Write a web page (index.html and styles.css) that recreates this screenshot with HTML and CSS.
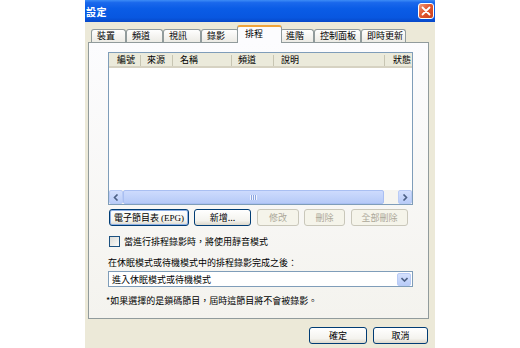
FILE: index.html
```html
<!DOCTYPE html>
<html lang="zh-Hant">

<head>
    <meta charset="UTF-8">
    <meta name="viewport" content="width=device-width, initial-scale=1.0">
    <title>設定</title>
    <link rel="stylesheet" href="styles.css">
</head>

<body>
    <div class="window">
        <div class="titlebar">
            <span class="title">設定</span>
            <span class="close">
                <svg width="10" height="10" viewBox="0 0 10 10">
                    <path d="M1.5 1.5 L8.5 8.5 M8.5 1.5 L1.5 8.5" stroke="#fff" stroke-width="1.8" stroke-linecap="round" />
                </svg>
            </span>
        </div>

        <div class="tabs">
            <span class="tab w35">裝置</span>
            <span class="tab w37">頻道</span>
            <span class="tab w38">視訊</span>
            <span class="tab w38">錄影</span>
            <span class="tab active">排程</span>
            <span class="tab w34">進階</span>
            <span class="tab w47">控制面板</span>
            <span class="tab w45">即時更新</span>
        </div>

        <div class="panel">
            <div class="listview">
                <div class="lv-header">
                    <span class="col c1">編號</span>
                    <span class="col c2">來源</span>
                    <span class="col c3">名稱</span>
                    <span class="col c4">頻道</span>
                    <span class="col c5">說明</span>
                    <span class="col c6">狀態</span>
                </div>
                <div class="lv-body"></div>
                <div class="hscroll">
                    <span class="sb-btn">
                        <svg width="6" height="7" viewBox="0 0 6 7">
                            <path d="M4.5 0.5 L1.5 3.5 L4.5 6.5" fill="none" stroke="#4d6185" stroke-width="1.6" />
                        </svg>
                    </span>
                    <span class="sb-thumb"><span class="grip"></span></span>
                    <span class="sb-track"></span>
                    <span class="sb-btn">
                        <svg width="6" height="7" viewBox="0 0 6 7">
                            <path d="M1.5 0.5 L4.5 3.5 L1.5 6.5" fill="none" stroke="#4d6185" stroke-width="1.6" />
                        </svg>
                    </span>
                </div>
            </div>

            <div class="btn-row">
                <span class="btn focus b-epg">電子節目表 <span class="latin">(EPG)</span></span>
                <span class="btn b-add">新增...</span>
                <span class="btn disabled b-edit">修改</span>
                <span class="btn disabled b-del">刪除</span>
                <span class="btn disabled b-delall">全部刪除</span>
            </div>

            <div class="check">
                <span class="box"></span>
                <span>當進行排程錄影時，將使用靜音模式</span>
            </div>

            <div class="label">在休眠模式或待機模式中的排程錄影完成之後：</div>
            <div class="combo">
                <span class="combo-text">進入休眠模式或待機模式</span>
                <span class="drop">
                    <svg width="7" height="5" viewBox="0 0 7 5">
                        <path d="M0.5 1 L3.5 4 L6.5 1" fill="none" stroke="#4d6185" stroke-width="1.6" />
                    </svg>
                </span>
            </div>

            <p class="note">*如果選擇的是鎖碼節目，屆時這節目將不會被錄影。</p>
        </div>

        <div class="footer">
            <span class="btn b-ok">確定</span>
            <span class="btn b-cancel">取消</span>
        </div>
    </div>
</body>

</html>
```

FILE: styles.css
```css
* {
    margin: 0;
    padding: 0;
    box-sizing: border-box;
}

body {
    background: #fff;
    font-family: "Noto Sans CJK TC", "Noto Sans CJK JP", sans-serif;
    font-size: 9px;
    color: #000;
}

.window {
    width: 350px;
    height: 348px;
    margin-left: 85px;
    background: #ece9d8;
}

/* 標題列 */
.titlebar {
    height: 22px;
    display: flex;
    align-items: center;
    justify-content: space-between;
    padding: 0 1px 0 1px;
    background: linear-gradient(#3d8cf6 0%, #1a68ec 12%, #0a5ce6 40%, #0857e0 80%, #0748c8 100%);
}

.title {
    color: #fff;
    font-weight: bold;
    font-size: 10px;
    letter-spacing: 0.5px;
}

.close {
    width: 16px;
    height: 16px;
    display: flex;
    align-items: center;
    justify-content: center;
    border: 1px solid #fff;
    border-radius: 3px;
    background: linear-gradient(135deg, #f09a7c 0%, #e2572f 45%, #c9401d 100%);
}

/* 頁籤 */
.tabs {
    height: 20px;
    display: flex;
    align-items: flex-end;
    padding-left: 6px;
}

.tab {
    height: 13px;
    padding-left: 5px;
    line-height: 12px;
    border: 1px solid #919b9c;
    border-bottom: none;
    border-radius: 3px 3px 0 0;
    background: linear-gradient(#fefefe, #ecebe5);
    white-space: nowrap;
}

.w34 { width: 34px; }
.w35 { width: 35px; }
.w37 { width: 37px; }
.w38 { width: 38px; }
.w45 { width: 45px; }
.w47 { width: 47px; }

.tab.active {
    width: 45px;
    height: 18px;
    margin: 0 -2px -1px -2px;
    padding-left: 7px;
    line-height: 14px;
    border-top: 2px solid #f0a43a;
    background: #fcfcfe;
    position: relative;
    z-index: 1;
}

/* 頁籤內容 */
.panel {
    width: 341px;
    height: 277px;
    margin-left: 3px;
    padding: 9px 0 0 19px;
    border: 1px solid #919b9c;
    background: linear-gradient(#fcfcfe, #f4f3ee);
}

.listview {
    width: 305px;
    height: 153px;
    display: flex;
    flex-direction: column;
    border: 1px solid #7f9db9;
    background: #fff;
}

.lv-header {
    height: 15px;
    display: flex;
    background: #ebeadb;
    border-bottom: 2px solid #d6d2c2;
}

.col {
    height: 11px;
    margin-top: 2px;
    line-height: 10px;
    padding-left: 7px;
    border-right: 1px solid #c7c5b2;
    white-space: nowrap;
}

.c1 { width: 32px; padding-left: 8px; }
.c2 { width: 32px; padding-left: 6px; }
.c3 { width: 59px; }
.c4 { width: 42px; padding-left: 6px; }
.c5 { width: 111px; }

.c6 {
    flex: 1;
    border-right: none;
    text-align: right;
    padding: 0 1px 0 0;
}

.lv-body {
    flex: 1;
}

/* 水平捲軸 */
.hscroll {
    height: 14px;
    display: flex;
    background: #f6f5f0;
}

.sb-btn {
    width: 14px;
    height: 14px;
    display: flex;
    align-items: center;
    justify-content: center;
    border: 1px solid #b9cbf5;
    border-radius: 2px;
    background: linear-gradient(#d4e0fd, #b9ccf8);
}

.sb-thumb {
    width: 261px;
    height: 14px;
    display: flex;
    align-items: center;
    justify-content: center;
    border: 1px solid #a9bff2;
    border-radius: 2px;
    background: linear-gradient(#cddbfd, #b6caf7);
}

.grip {
    width: 7px;
    height: 5px;
    background: repeating-linear-gradient(90deg, #eef3fe 0 1px, #8ca6e0 1px 2px);
}

.sb-track {
    flex: 1;
}

/* 按鈕 */
.btn {
    height: 17px;
    display: inline-flex;
    align-items: center;
    justify-content: center;
    border: 1px solid #003c74;
    border-radius: 3px;
    background: linear-gradient(#ffffff 0%, #f4f3ee 70%, #dcd8cc 100%);
    white-space: nowrap;
}

.btn.focus {
    box-shadow: inset 0 0 0 1px #8fb0e4;
}

.btn.disabled {
    color: #aca899;
    border-color: #c9c7ba;
    background: #f5f4ea;
}

.latin {
    font-family: "Liberation Serif", serif;
    margin-left: 2px;
}

.btn-row {
    display: flex;
    margin-top: 4px;
    padding-left: 1px;
}

.b-epg { width: 80px; }
.b-add { width: 57px; margin-left: 5px; }
.b-edit { width: 42px; margin-left: 6px; }
.b-del { width: 41px; margin-left: 5px; }
.b-delall { width: 57px; margin-left: 6px; }

.check {
    display: flex;
    align-items: center;
    height: 11px;
    margin-top: 10px;
    padding-left: 1px;
}

.box {
    width: 11px;
    height: 11px;
    margin-right: 4px;
    border: 1px solid #1c5180;
    background: linear-gradient(135deg, #dcdcd7, #fbfbf9);
}

.label {
    height: 12px;
    margin-top: 10px;
    line-height: 12px;
}

.combo {
    width: 305px;
    height: 16px;
    margin-top: 2px;
    display: flex;
    align-items: center;
    justify-content: space-between;
    padding: 0 1px 0 3px;
    border: 1px solid #7f9db9;
    background: #fff;
}

.drop {
    width: 14px;
    height: 13px;
    display: flex;
    align-items: center;
    justify-content: center;
    border: 1px solid #b9cbf5;
    border-radius: 2px;
    background: linear-gradient(#d4e0fd, #b9ccf8);
}

.note {
    height: 12px;
    margin-top: 8px;
    margin-left: -2px;
    line-height: 12px;
}

.footer {
    display: flex;
    justify-content: flex-end;
    padding: 8px 7px 0 0;
}

.b-ok { width: 58px; }
.b-cancel { width: 55px; margin-left: 6px; }
```
